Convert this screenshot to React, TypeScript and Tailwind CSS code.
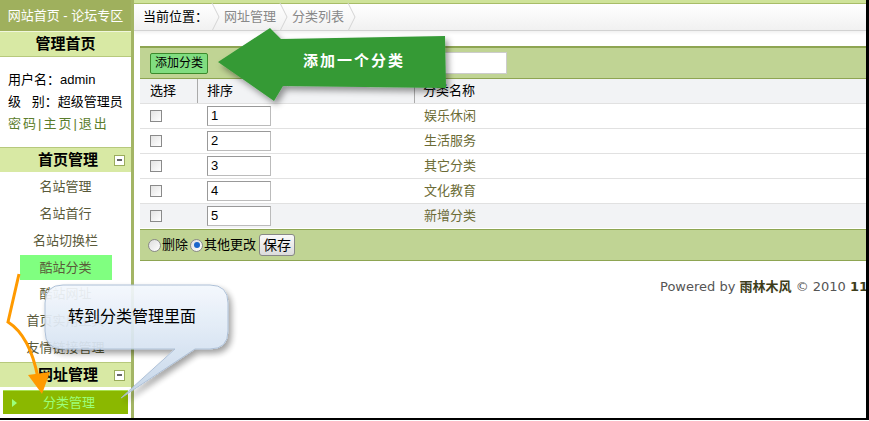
import React from "react";

const font = { fontFamily: '"Liberation Sans", "Noto Sans CJK SC", sans-serif' };

function Chevron() {
  return (
    <svg width="10" height="28" viewBox="0 0 10 28" className="mx-[3px] shrink-0">
      <polyline points="1,0 8,14 1,28" fill="none" stroke="#d4d4d4" strokeWidth="1" />
    </svg>
  );
}

function Minus() {
  return (
    <span className="w-[11px] h-[11px] border border-[#9aac5c] bg-white flex items-center justify-center">
      <span className="w-[5px] h-[2px] bg-[#666]" />
    </span>
  );
}

function Checkbox() {
  return <span className="w-[12px] h-[12px] border border-[#8a8a8a] bg-gradient-to-br from-[#e4e4e4] to-white inline-block" />;
}

function Radio({ checked }: { checked?: boolean }) {
  return (
    <span className="w-[13px] h-[13px] rounded-full border border-[#8a8a8a] bg-gradient-to-br from-[#ddd] to-white flex items-center justify-center">
      {checked && <span className="w-[6px] h-[6px] rounded-full bg-[#1a66cc]" />}
    </span>
  );
}

const rows = [
  { n: "1", name: "娱乐休闲" },
  { n: "2", name: "生活服务" },
  { n: "3", name: "其它分类" },
  { n: "4", name: "文化教育" },
  { n: "5", name: "新增分类" },
];

function Sidebar() {
  return (
    <div className="w-[134px] shrink-0 h-[418px] border-r-[3px] border-[#a3b565] flex flex-col bg-white">
      <div className="h-[31px] bg-[#9fb05d] text-white text-[13px] flex items-center justify-center">
        网站首页 - 论坛专区
      </div>
      <div className="h-[26px] bg-[#d8e9a4] border-y border-[#f0f6dc] border-b-[#b7c97c] text-[15px] font-bold text-black flex items-center justify-center">
        管理首页
      </div>
      <div className="pt-[12px] pl-[8px] text-[13px] leading-[22px] text-black">
        <div>用户名：admin</div>
        <div>级&nbsp;&nbsp;&nbsp;别：超级管理员</div>
        <div className="text-[#5b7d2c] tracking-[2px]">密码|主页|退出</div>
      </div>
      <div className="mt-[12px] h-[25px] bg-[#d8e9a4] border-t border-[#b7c97c] flex items-center pl-[38px] pr-[6px]">
        <span className="text-[15px] font-bold text-black flex-1">首页管理</span>
        <Minus />
      </div>
      <div className="flex flex-col items-center text-[13px] text-[#5a5a3a] pt-[1px]">
        <div className="h-[27px] flex items-center">名站管理</div>
        <div className="h-[27px] flex items-center">名站首行</div>
        <div className="h-[27px] flex items-center">名站切换栏</div>
        <div className="h-[25px] w-[92px] bg-[#80ff80] flex items-center justify-center mt-[1px]">酷站分类</div>
        <div className="h-[27px] flex items-center">酷站网址</div>
        <div className="h-[27px] flex items-center">首页实用工具</div>
        <div className="h-[27px] flex items-center">友情链接管理</div>
      </div>
      <div className="mt-[1px] h-[25px] bg-[#d8e9a4] border-t border-[#b7c97c] flex items-center pl-[38px] pr-[6px]">
        <span className="text-[15px] font-bold text-black flex-1">网址管理</span>
        <Minus />
      </div>
      <div className="mx-[3px] mt-[3px] h-[24px] bg-[#8bb800] border-t border-[#a8e050] flex items-center text-[13px] text-[#9cff7a]">
        <span className="ml-[9px] w-0 h-0 border-y-[4px] border-y-transparent border-l-[5px] border-l-[#9cff7a]" />
        <span className="ml-[26px]">分类管理</span>
      </div>
    </div>
  );
}

function Main() {
  return (
    <div className="flex-1 h-[418px] border-r-[3px] border-black flex flex-col bg-white overflow-hidden">
      <div className="h-[4px] bg-[#cfe39a] border-b border-[#a8bd68]" />
      <div className="h-[27px] bg-gradient-to-b from-white to-[#f1f1f1] border-b border-[#d2d2d2] flex items-center pl-[9px] text-[13px] shadow-[0_2px_3px_rgba(0,0,0,0.06)]">
        <span className="text-black">当前位置：</span>
        <Chevron />
        <span className="text-[#888]">网址管理</span>
        <Chevron />
        <span className="text-[#888]">分类列表</span>
        <Chevron />
      </div>
      <div className="ml-[6px] mt-[15px] flex flex-col text-[12px]">
        <div className="h-[32px] bg-[#c0d494] border-t-2 border-[#8ea552] flex items-center pl-[10px]">
          <span className="h-[21px] px-[4px] bg-[#80dd80] border border-[#3c8a2c] rounded-[2px] flex items-center text-[12px] text-black">
            添加分类
          </span>
          <span className="ml-[235px] w-[64px] h-[22px] bg-white border border-[#ccc]" />
        </div>
        <div className="h-[25px] bg-[#f2f3f5] border-t border-[#8ea552] flex items-center text-[13px] text-black">
          <span className="w-[58px] pl-[10px] h-full flex items-center border-r border-[#aaa]">选择</span>
          <span className="w-[217px] pl-[9px] h-full flex items-center border-r border-[#aaa]">排序</span>
          <span className="pl-[8px]">分类名称</span>
        </div>
        {rows.map((r, i) => (
          <div
            key={r.n}
            className={`h-[25px] border-t border-[#e1e1e1] flex items-center ${i === 4 ? "bg-[#f2f3f5]" : "bg-white"}`}
          >
            <span className="w-[58px] pl-[10px] flex items-center">
              <Checkbox />
            </span>
            <span className="w-[217px] pl-[9px] flex items-center">
              <span className="w-[64px] h-[20px] bg-white border border-[#bbb] border-t-[#999] border-l-[#999] pl-[3px] text-[13px] leading-[18px] text-black">
                {r.n}
              </span>
            </span>
            <span className="pl-[9px] text-[13px] text-[#6b6b35]">{r.name}</span>
          </div>
        ))}
        <div className="mt-[1px] h-[32px] bg-[#c0d494] border-y border-[#8ea552] flex items-center pl-[8px] text-[13px] text-black">
          <Radio />
          <span className="ml-[1px]">删除</span>
          <span className="ml-[2px]"><Radio checked /></span>
          <span className="ml-[1px]">其他更改</span>
          <span className="ml-[3px] h-[22px] px-[3px] bg-gradient-to-b from-[#fafafa] to-[#dcdcdc] border border-[#888] rounded-[3px] flex items-center text-[14px]">
            保存
          </span>
        </div>
      </div>
      <div
        className="mt-[16px] ml-[526px] text-[13px] text-[#555] whitespace-nowrap"
        style={{ fontFamily: '"DejaVu Sans", "Noto Sans CJK SC", sans-serif' }}
      >
        Powered by <b className="text-[#3d3d1a]">雨林木风</b> © 2010 <b className="text-[#3d3d1a]">114</b>
      </div>
    </div>
  );
}

export default function App() {
  return (
    <div className="relative w-[869px] h-[421px] overflow-hidden bg-white" style={font}>
      <div className="flex border-b-2 border-black">
        <Sidebar />
        <Main />
      </div>

      {/* callouts drawn over the page */}
      <svg className="absolute left-0 top-0 pointer-events-none" width="869" height="421">
        <defs>
          <filter id="sh" x="-10%" y="-20%" width="130%" height="150%">
            <feDropShadow dx="3" dy="4" stdDeviation="3" floodColor="#000" floodOpacity="0.4" />
          </filter>
          <linearGradient id="bub" x1="0" y1="0" x2="0" y2="1">
            <stop offset="0" stopColor="#f4f8fd" />
            <stop offset="0.5" stopColor="#dae6f4" />
            <stop offset="1" stopColor="#c2d3e6" />
          </linearGradient>
        </defs>
        <polygon
          points="218,62 270,28 281,39 445,36 446,88 283,86 274,101"
          fill="#349a36"
          filter="url(#sh)"
        />
        {/* orange arrow */}
        <path d="M19,274 L8,322 Q30,336 38,378" fill="none" stroke="#ff9a00" strokeWidth="3" />
        <polygon points="28,375 50,372 42,394" fill="#ff9a00" />
        {/* speech bubble */}
        <path
          d="M63,285 L210,285 Q228,285 228,303 L228,331 Q228,349 210,349 L195,349 L121,398 L175,349 L63,349 Q45,349 45,331 L45,303 Q45,285 63,285 Z"
          fill="url(#bub)"
          stroke="#a8bcd4"
          strokeWidth="1"
          filter="url(#sh)"
          opacity="0.93"
        />
      </svg>
      <div className="absolute left-[303px] top-[50px] text-[15px] font-bold text-white tracking-[2px] pointer-events-none">
        添加一个分类
      </div>
      <div className="absolute left-[68px] top-[305px] text-[16px] text-black pointer-events-none">
        转到分类管理里面
      </div>
    </div>
  );
}
